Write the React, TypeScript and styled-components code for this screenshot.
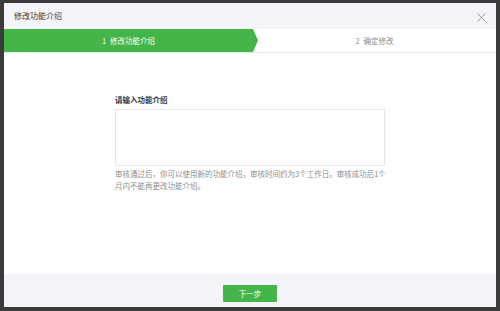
import React from 'react'
import styled, { createGlobalStyle } from 'styled-components'

const GlobalStyle = createGlobalStyle`
    html, body {
        margin: 0;
        padding: 0;
        background: #3b3b3b;
    }
    body {
        font-family: "Noto Sans CJK SC", "Noto Sans", sans-serif;
    }
`

const Backdrop = styled.div`
    width: 500px;
    height: 311px;
    box-sizing: border-box;
    padding: 3px 4px 4px 4px;
    background: #3b3b3b;
`
const Dialog = styled.div`
    height: 100%;
    display: flex;
    flex-direction: column;
    background: #fff;
`
const Header = styled.div`
    height: 26px;
    display: flex;
    align-items: center;
    justify-content: space-between;
    padding: 0 10px 0 10px;
    background: #f4f5f9;
`
const Title = styled.div`
    font-size: 8px;
    line-height: 12px;
    color: #353535;
`
const Close = styled.svg`
    width: 9px;
    height: 9px;
    margin-top: 2px;
`
const Steps = styled.div`
    display: grid;
    grid-template-columns: 249px 1fr;
    height: 23px;
    border-bottom: 1px solid #e7e7eb;
`
const Step = styled.div<{ $active?: boolean }>`
    position: relative;
    z-index: ${p => (p.$active ? 1 : 0)};
    display: flex;
    align-items: center;
    justify-content: center;
    gap: 4px;
    font-size: 7.5px;
    color: ${p => (p.$active ? '#fff' : '#8d8d8d')};
    background: ${p => (p.$active ? '#44b549' : '#fff')};
    ${p =>
        p.$active &&
        `
        &::after {
            content: '';
            position: absolute;
            top: 0;
            right: -5px;
            width: 5px;
            height: 100%;
            background: #44b549;
            clip-path: polygon(0 0, 100% 50%, 0 100%);
        }
    `}
`
const Body = styled.div`
    flex: 1;
    display: flex;
    justify-content: center;
    padding-top: 41px;
`
const Form = styled.div`
    width: 270px;
    display: flex;
    flex-direction: column;
`
const Label = styled.div`
    font-size: 7.5px;
    line-height: 12px;
    font-weight: 600;
    color: #353535;
    margin-bottom: 3px;
`
const TextBox = styled.textarea`
    box-sizing: border-box;
    width: 270px;
    height: 57px;
    margin: 0;
    border: 1px solid #e7e7eb;
    resize: none;
    outline: none;
    font-family: inherit;
`
const Tip = styled.p`
    margin: 2px -4px 0 0;
    font-size: 7.5px;
    line-height: 12px;
    color: #8d8d8d;
`
const Footer = styled.div`
    display: flex;
    justify-content: center;
    padding: 11px 0 5px 0;
    background: #f4f5f9;
`
const Button = styled.button`
    width: 54px;
    height: 17px;
    padding: 0;
    border: none;
    border-radius: 1px;
    background: #44b549;
    color: #fff;
    font-family: inherit;
    font-size: 7.5px;
`

export default function App() {
    return (
        <Backdrop>
            <GlobalStyle />
            <Dialog>
                <Header>
                    <Title>修改功能介绍</Title>
                    <Close viewBox="0 0 9 9">
                        <path d="M0.5 0.5L8.5 8.5M8.5 0.5L0.5 8.5" stroke="#9a9a9a" strokeWidth="1" />
                    </Close>
                </Header>
                <Steps>
                    <Step $active>
                        <span>1</span>
                        <span>修改功能介绍</span>
                    </Step>
                    <Step>
                        <span>2</span>
                        <span>确定修改</span>
                    </Step>
                </Steps>
                <Body>
                    <Form>
                        <Label>请输入功能介绍</Label>
                        <TextBox />
                        <Tip>
                            审核通过后，你可以使用新的功能介绍，审核时间约为3个工作日。审核成功后1个月内不能再更改功能介绍。
                        </Tip>
                    </Form>
                </Body>
                <Footer>
                    <Button>下一步</Button>
                </Footer>
            </Dialog>
        </Backdrop>
    )
}
